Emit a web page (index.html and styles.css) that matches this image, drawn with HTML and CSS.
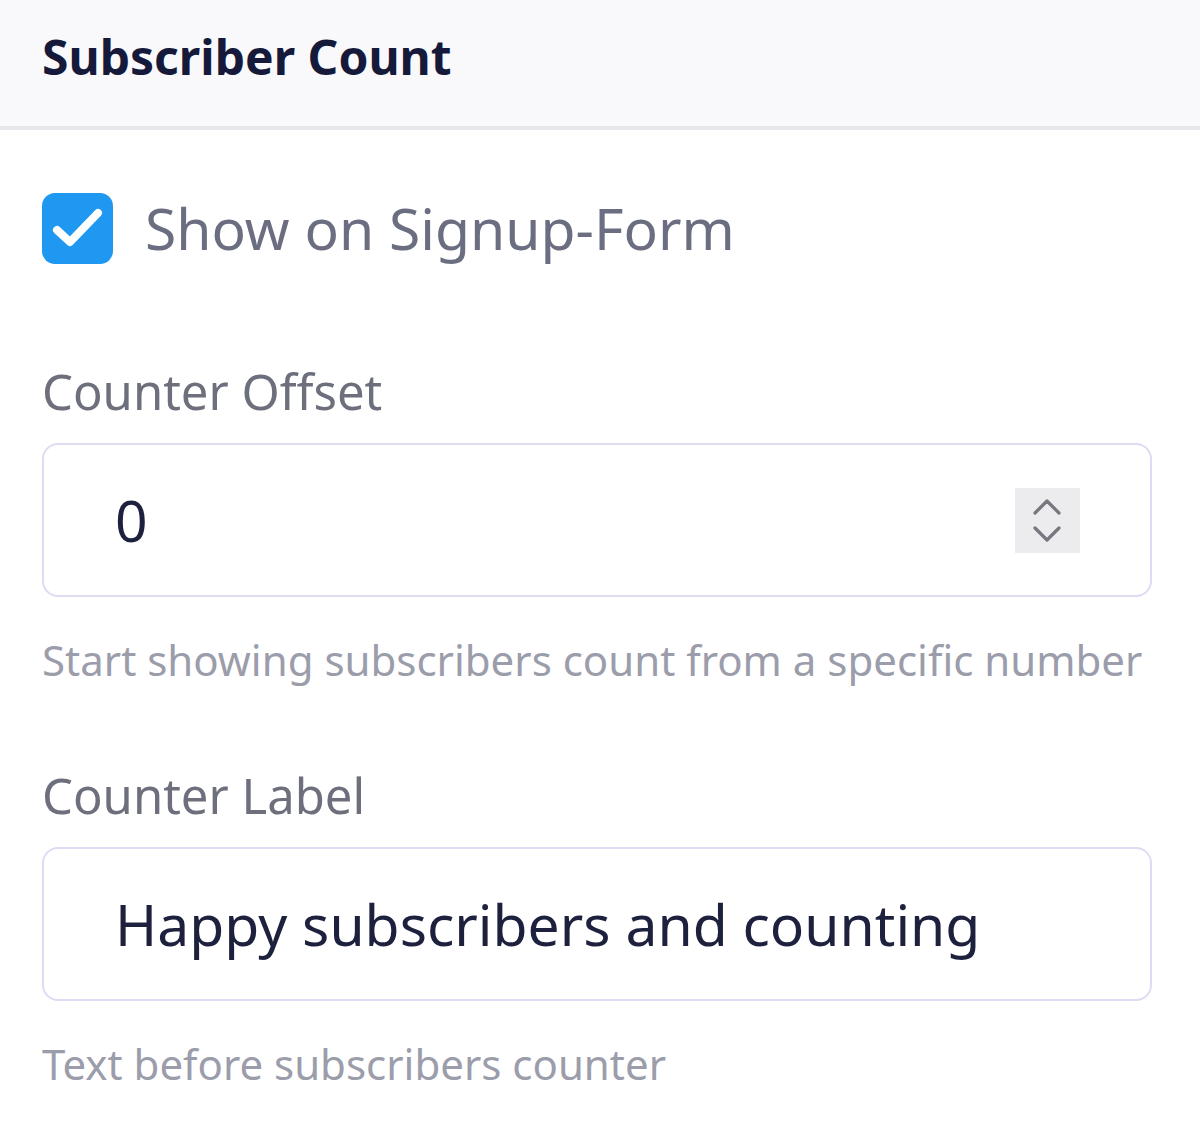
FILE: index.html
```html
<!DOCTYPE html>
<html lang="en">
<head>
    <meta charset="UTF-8">
    <title>Subscriber Count</title>
    <link rel="stylesheet" href="styles.css">
</head>
<body>
    <!-- Cabeçalho do painel -->
    <header class="panel-header">
        <h2>Subscriber Count</h2>
    </header>

    <section class="panel-body">
        <label class="check-row">
            <span class="checkbox">
                <svg viewBox="0 0 71 71" width="71" height="71"><path d="M15 37L28 49L56 20" fill="none" stroke="#fff" stroke-width="8" stroke-linecap="round" stroke-linejoin="round"/></svg>
            </span>
            <span class="check-text">Show on Signup-Form</span>
        </label>

        <div class="field">
            <div class="field-label">Counter Offset</div>
            <div class="input">
                <span class="input-value">0</span>
                <span class="spinner">
                    <svg viewBox="0 0 65 65" width="65" height="65"><path d="M20 25L32 13L44 25M20 40L32 52L44 40" fill="none" stroke="#77787f" stroke-width="3.2" stroke-linecap="round" stroke-linejoin="round"/></svg>
                </span>
            </div>
            <div class="field-help">Start showing subscribers count from a specific number</div>
        </div>

        <div class="field">
            <div class="field-label">Counter Label</div>
            <div class="input">
                <span class="input-value">Happy subscribers and counting</span>
            </div>
            <div class="field-help">Text before subscribers counter</div>
        </div>
    </section>
</body>
</html>
```

FILE: styles.css
```css
/* Estilos gerais */
body {
    font-family: "Noto Sans", sans-serif;
    margin: 0;
    padding: 0;
    background: #fff;
}

.panel-header {
    background-color: #f9f9fc;
    height: 130px;
    box-sizing: border-box;
    border-bottom: 4px solid #e6e7eb;
    display: flex;
    align-items: center;
    padding: 0 42px 14px;
}

.panel-header h2 {
    margin: 0;
    font-size: 48px;
    font-weight: 700;
    color: #161a3a;
}

.panel-body {
    padding: 59px 48px 0 42px;
}

/* Checkbox */
.check-row {
    display: flex;
    align-items: center;
    gap: 32px;
}

.checkbox {
    width: 71px;
    height: 71px;
    border-radius: 13px;
    background-color: #1e98f0;
    display: flex;
}

.check-text {
    font-size: 57px;
    color: #6b6e80;
}

/* Campos */
.field {
    margin-top: 100px;
}

.field + .field {
    margin-top: 90px;
}

.field-label {
    font-size: 49px;
    color: #6d707c;
    line-height: 1;
}

.input {
    margin-top: 27px;
    height: 150px;
    border: 2px solid #dcdcf2;
    border-radius: 16px;
    display: flex;
    align-items: center;
    padding: 0 70px 0 71px;
}

.input-value {
    flex: 1;
    font-size: 57px;
    color: #1d213d;
}

.spinner {
    width: 65px;
    height: 65px;
    background-color: #ececef;
    display: flex;
}

.field-help {
    margin-top: 42px;
    font-size: 42px;
    color: #9b9dab;
    line-height: 1;
}
```
